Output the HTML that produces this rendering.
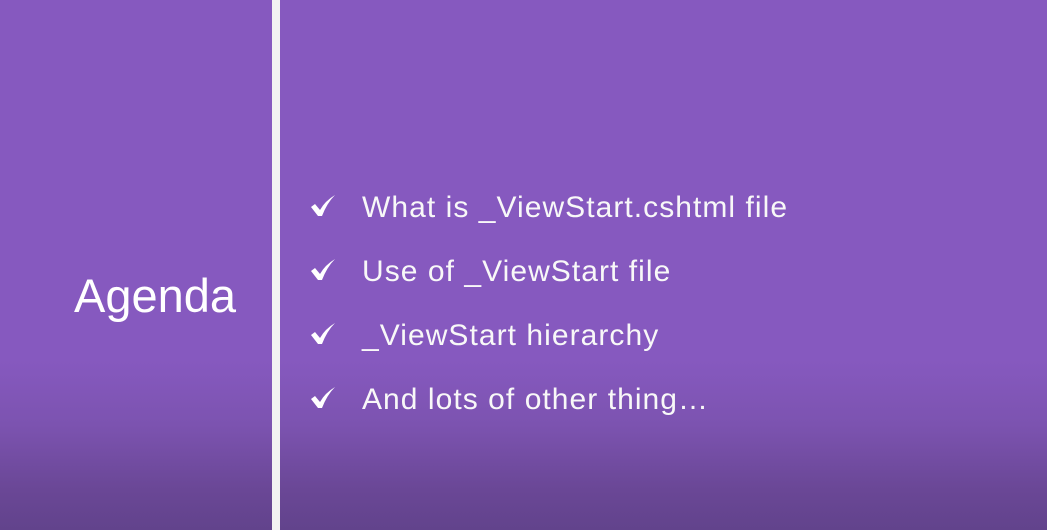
<!DOCTYPE html>
<html><head><style>
html,body{margin:0;padding:0}
body{width:1047px;height:530px;position:relative;overflow:hidden;font-family:"Liberation Sans",sans-serif;
background:linear-gradient(to bottom,#8659bf 0px,#8659bf 360px,#7c53b0 425px,#6a4796 490px,#62438c 530px);}
.bar{position:absolute;left:272px;top:0;width:8px;height:530px;background:#f2f2f2}
.ag{position:absolute;left:74px;top:268px;font-size:47px;color:#fff;line-height:56px}
.it{position:absolute;left:362px;font-size:30px;color:#f8f8f8;line-height:36px;white-space:nowrap;letter-spacing:1.05px}
.ck{position:absolute;left:311px;width:24px;height:22px}
</style></head><body>
<div class="bar"></div>
<div class="ag">Agenda</div>
<svg class="ck" style="top:195px" viewBox="0 0 24 22"><path d="M0 12 L4 9 L9 15 Q14 6 24 0 Q16 8 11 21 L7 21 Z" fill="#fff"/></svg>
<div class="it" style="top:190px">What is _ViewStart.cshtml file</div>
<svg class="ck" style="top:259px" viewBox="0 0 24 22"><path d="M0 12 L4 9 L9 15 Q14 6 24 0 Q16 8 11 21 L7 21 Z" fill="#fff"/></svg>
<div class="it" style="top:254px">Use of _ViewStart file</div>
<svg class="ck" style="top:323px" viewBox="0 0 24 22"><path d="M0 12 L4 9 L9 15 Q14 6 24 0 Q16 8 11 21 L7 21 Z" fill="#fff"/></svg>
<div class="it" style="top:318px">_ViewStart hierarchy</div>
<svg class="ck" style="top:387px" viewBox="0 0 24 22"><path d="M0 12 L4 9 L9 15 Q14 6 24 0 Q16 8 11 21 L7 21 Z" fill="#fff"/></svg>
<div class="it" style="top:382px">And lots of other thing…</div>
</body></html>
